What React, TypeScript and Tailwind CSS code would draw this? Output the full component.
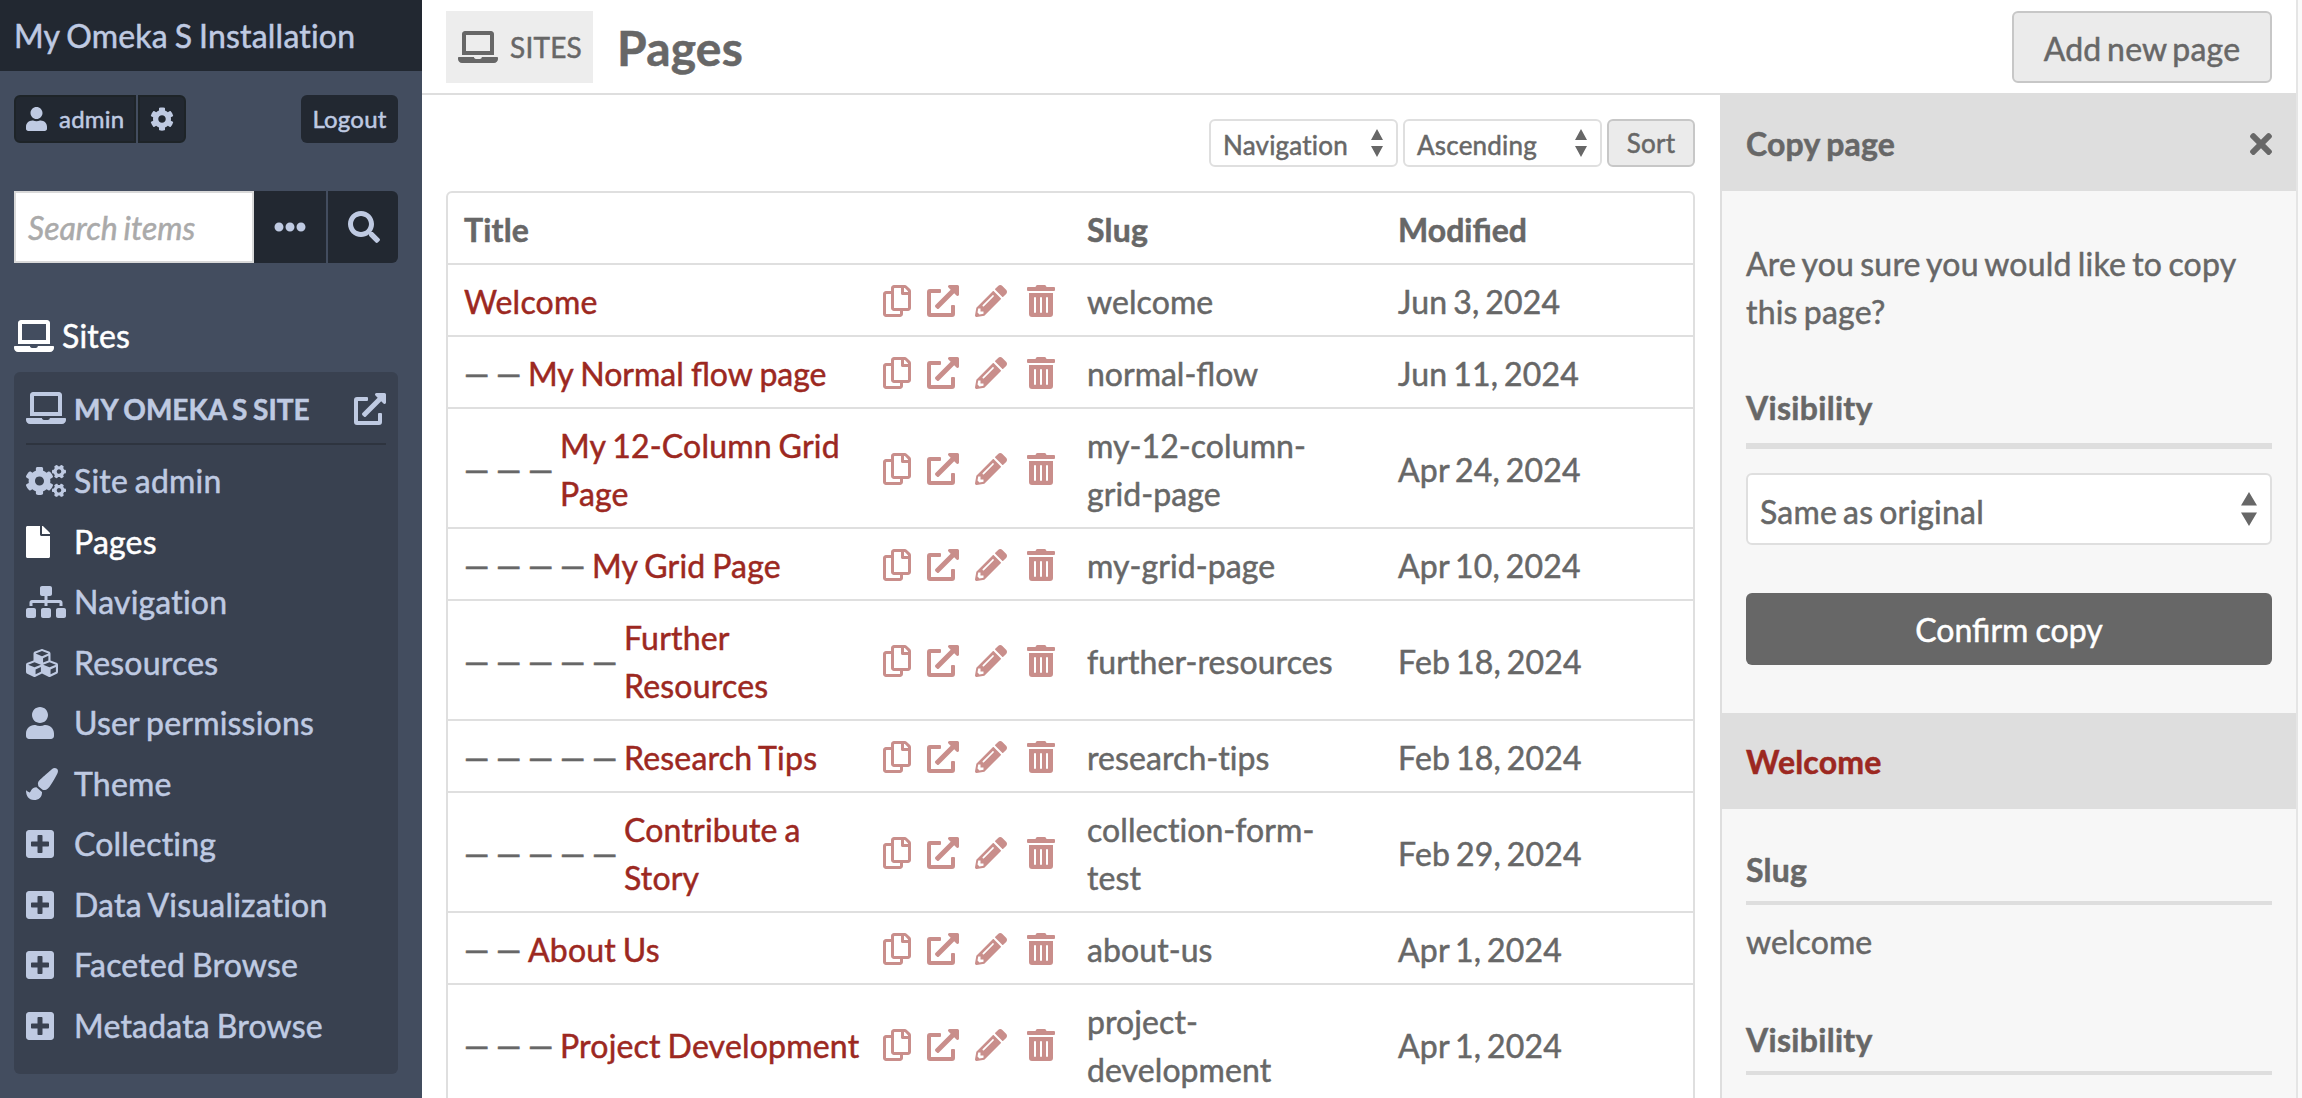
import React from 'react';
import {
  FaLaptop,
  FaCogs,
  FaFile,
  FaSitemap,
  FaCubes,
  FaUser,
  FaPaintBrush,
  FaPlusSquare,
  FaCog,
  FaEllipsisH,
  FaSearch,
  FaTimes,
  FaExternalLinkAlt,
  FaRegCopy,
  FaPencilAlt,
  FaTrashAlt,
} from 'react-icons/fa';
import type { IconType } from 'react-icons';

type NavItem = { label: string; icon: IconType; size: string; active?: boolean };

const navItems: NavItem[] = [
  { label: 'Site admin', icon: FaCogs, size: 'h-8 w-10' },
  { label: 'Pages', icon: FaFile, size: 'h-8 w-6', active: true },
  { label: 'Navigation', icon: FaSitemap, size: 'h-8 w-10' },
  { label: 'Resources', icon: FaCubes, size: 'h-8 w-8' },
  { label: 'User permissions', icon: FaUser, size: 'h-8 w-7' },
  { label: 'Theme', icon: FaPaintBrush, size: 'h-8 w-8' },
  { label: 'Collecting', icon: FaPlusSquare, size: 'h-8 w-7' },
  { label: 'Data Visualization', icon: FaPlusSquare, size: 'h-8 w-7' },
  { label: 'Faceted Browse', icon: FaPlusSquare, size: 'h-8 w-7' },
  { label: 'Metadata Browse', icon: FaPlusSquare, size: 'h-8 w-7' },
];

type PageRow = { title: string; depth: number; slug: string; modified: string };

const pages: PageRow[] = [
  { title: 'Welcome', depth: 0, slug: 'welcome', modified: 'Jun 3, 2024' },
  { title: 'My Normal flow page', depth: 2, slug: 'normal-flow', modified: 'Jun 11, 2024' },
  { title: 'My 12-Column Grid Page', depth: 3, slug: 'my-12-column-grid-page', modified: 'Apr 24, 2024' },
  { title: 'My Grid Page', depth: 4, slug: 'my-grid-page', modified: 'Apr 10, 2024' },
  { title: 'Further Resources', depth: 5, slug: 'further-resources', modified: 'Feb 18, 2024' },
  { title: 'Research Tips', depth: 5, slug: 'research-tips', modified: 'Feb 18, 2024' },
  { title: 'Contribute a Story', depth: 5, slug: 'collection-form-test', modified: 'Feb 29, 2024' },
  { title: 'About Us', depth: 2, slug: 'about-us', modified: 'Apr 1, 2024' },
  { title: 'Project Development', depth: 3, slug: 'project-development', modified: 'Apr 1, 2024' },
];

// Tracking switches ligatures off, so text with "fi" or "fl" is set without it.
const ligatures = 'tracking-normal [word-spacing:-1px]';

function titleSpacing(text: string) {
  return /f[il]/.test(text) ? ligatures : '';
}

function slugSpacing(text: string) {
  return /f[il]/.test(text) ? ligatures : 'tracking-[0.08px]';
}

function SelectArrows({ className }: { className: string }) {
  return (
    <svg viewBox="0 0 16 34" preserveAspectRatio="none" className={className} fill="currentColor">
      <path d="M8 0 16 13.5H0zM8 34 0 20.5h16z" />
    </svg>
  );
}

function Sidebar() {
  return (
    <aside className="w-[422px] shrink-0 bg-[#434d5f] text-[#bfcae2]">
      <div className="flex h-[71px] items-center bg-[#222831] pt-px pl-[14px]">My Omeka S Installation</div>

      <div className="mt-6 flex h-12 justify-between pr-6 pl-[14px] text-[24px] leading-[36px]">
        <div className="flex gap-[2px]">
          <a className="flex w-[122px] items-center rounded-l-md border-2 border-[#1e2428] bg-[#222831] pl-[10px]">
            <FaUser className="h-6 w-[21px]" />
            <span className="ml-3">admin</span>
          </a>
          <a className="flex w-12 items-center justify-center rounded-r-md border-2 border-[#1e2428] bg-[#222831]">
            <FaCog className="size-6" />
          </a>
        </div>
        <a className="flex w-[97px] items-center justify-center rounded-md bg-[#222831]">Logout</a>
      </div>

      <div className="mt-12 flex h-[72px] pr-6 pl-[14px]">
        <div className="flex w-[240px] items-center border-2 border-[#d9d9d9] bg-white pt-[2px] pl-3 tracking-normal text-[#aaaaaa] italic">
          Search items
        </div>
        <button className="flex w-[72px] items-center justify-center bg-[#222831]">
          <FaEllipsisH className="size-8" />
        </button>
        <button className="ml-[2px] flex w-[70px] items-center justify-center rounded-r-md bg-[#222831] pl-[2px]">
          <FaSearch className="size-8" />
        </button>
      </div>

      <div className="mt-[49px] flex h-12 items-center pl-[14px] text-white">
        <FaLaptop className="h-8 w-10" />
        <span className="ml-2">Sites</span>
      </div>

      <nav className="mt-3 mr-6 ml-[14px] h-[702px] rounded-md bg-[#394150] px-3">
        <div className="flex h-[73px] items-center border-b-2 border-[#2e343f]">
          <FaLaptop className="h-8 w-10" />
          <span className="ml-2 flex-1 pt-[2px] text-[28px] font-bold tracking-normal whitespace-nowrap [word-spacing:-1px]">
            MY OMEKA S SITE
          </span>
          <FaExternalLinkAlt className="mt-[2px] size-8" />
        </div>
        <ul className="mt-[6px]">
          {navItems.map(({ label, icon: Icon, size, active }) => (
            <li key={label} className={active ? 'flex h-[60.5px] items-center text-white' : 'flex h-[60.5px] items-center'}>
              <span className="flex w-12 shrink-0">
                <Icon className={size} />
              </span>
              {label}
            </li>
          ))}
        </ul>
      </nav>
    </aside>
  );
}

function SortSelect({ label, className }: { label: string; className: string }) {
  return (
    <div className={className}>
      <span className="pt-[4px]">{label}</span>
      <SelectArrows className="h-7 w-3" />
    </div>
  );
}

function PagesTable() {
  return (
    <div className="mt-6 ml-6 w-[1249px] rounded-t-md border-2 border-[#dfdfdf]">
      <div className="grid h-[72px] grid-cols-[607px_311px_1fr] items-center border-b-2 border-[#dfdfdf] pt-1 pl-4 font-bold">
        <div>Title</div>
        <div className="pl-4">Slug</div>
        <div className="pl-4 tracking-normal">Modified</div>
      </div>
      {pages.map((page) => (
        <div
          key={page.slug}
          className="grid grid-cols-[607px_311px_1fr] items-center border-b-2 border-[#dfdfdf] pt-[13px] pb-[9px] pl-4"
        >
          <div className="flex items-center justify-between pr-4">
            <div className="flex items-center">
              {page.depth > 0 && (
                <span className="flex shrink-0">
                  {Array.from({ length: page.depth }, (_, i) => (
                    <span key={i} className="w-8 shrink-0">
                      —
                    </span>
                  ))}
                </span>
              )}
              <a className={`text-[#9c2821] ${titleSpacing(page.title)}`}>{page.title}</a>
            </div>
            <div className="mb-[2px] ml-4 flex shrink-0 items-center text-[#c98e8b]">
              <FaRegCopy className="h-8 w-7" />
              <FaExternalLinkAlt className="ml-4 size-8" />
              <FaPencilAlt className="ml-4 size-8" />
              <FaTrashAlt className="ml-5 h-8 w-7" />
            </div>
          </div>
          <div className={`px-4 ${slugSpacing(page.slug)}`}>{page.slug}</div>
          <div className="pl-4 [word-spacing:-2.6px]">{page.modified}</div>
        </div>
      ))}
    </div>
  );
}

function CopyPanel() {
  return (
    <aside className="-mt-[2px] w-[576px] shrink-0 border-l-2 border-[#dedede] bg-[#f7f7f7]">
      <div className="flex h-[98px] items-center justify-between bg-[#dedede] px-6 pt-[4px] font-bold">
        Copy page
        <FaTimes className="h-8 w-[22px]" />
      </div>
      <div className="px-6 pt-[49px]">
        <p className="[word-spacing:-2.2px]">Are you sure you would like to copy this page?</p>
        <h4 className="mt-12 h-[65px] border-b-[6px] border-[#dedede] font-bold tracking-[0.3px]">Visibility</h4>
        <div className="mt-6 flex h-[72px] items-center justify-between rounded-md border-2 border-[#dfdfdf] bg-white pt-[6px] pr-[13px] pl-3">
          <span className="[word-spacing:-2.4px]">Same as original</span>
          <SelectArrows className="mb-[6px] h-[34px] w-4" />
        </div>
        <button className="mt-12 flex h-[72px] w-full items-center justify-center rounded-md bg-[#676767] pt-[2px] text-white">
          <span className={ligatures}>Confirm copy</span>
        </button>
      </div>
      <div className="mt-12 flex h-24 items-center bg-[#dedede] px-6 pt-[2px] font-bold text-[#9c2821]">Welcome</div>
      <div className="px-6 pt-[37px]">
        <h4 className="h-[59px] border-b-4 border-[#dedede] font-bold">Slug</h4>
        <p className="mt-[13px] tracking-[0.08px]">welcome</p>
        <h4 className="mt-[50px] h-[59px] border-b-4 border-[#dedede] font-bold tracking-[0.3px]">Visibility</h4>
      </div>
    </aside>
  );
}

export default function App() {
  return (
    <div className="flex h-[1098px] w-[2302px] overflow-hidden bg-[#fafafa] font-[Lato,sans-serif] text-[32px] leading-[48px] tracking-[0.2px] text-[#676767] [-webkit-text-stroke:0.5px] [word-spacing:-1.6px]">
      <Sidebar />
      <div className="flex w-[1876px] shrink-0 flex-col border-r-2 border-[#e5e5e5] bg-white">
        <header className="flex h-[95px] shrink-0 items-start border-b-2 border-[#dedede] pt-[11px] pr-6 pl-6">
          <div className="flex h-[72px] w-[147px] items-center bg-[#ededed] pl-3 text-[28px]">
            <FaLaptop className="h-8 w-10" />
            <span className="ml-3">SITES</span>
          </div>
          <h1 className="ml-6 flex h-[72px] flex-1 items-center pt-[2px] text-[48px] font-bold">Pages</h1>
          <button className="flex h-[72px] w-[260px] items-center justify-center rounded-md border-2 border-[#c7c7c7] bg-[#ebebeb] pt-[3px] [word-spacing:-2.8px]">
            Add new page
          </button>
        </header>
        <div className="flex flex-1">
          <main className="w-[1298px] shrink-0">
            <div className="mt-6 flex h-12 justify-end gap-[5px] pr-[25px] text-[26px]">
              <SortSelect
                label="Navigation"
                className="flex w-[189px] items-center justify-between rounded-md border-2 border-[#dfdfdf] pr-[13px] pl-3"
              />
              <SortSelect
                label="Ascending"
                className="flex w-[199px] items-center justify-between rounded-md border-2 border-[#dfdfdf] pr-[13px] pl-3"
              />
              <button className="flex w-[88px] items-center justify-center rounded-md border-2 border-[#c7c7c7] bg-[#ebebeb]">
                Sort
              </button>
            </div>
            <PagesTable />
          </main>
          <CopyPanel />
        </div>
      </div>
    </div>
  );
}
